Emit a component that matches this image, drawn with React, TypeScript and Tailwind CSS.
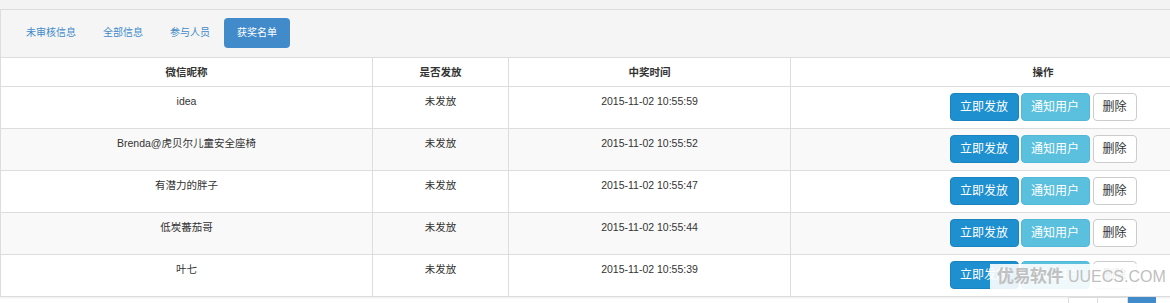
import React from "react";

const rows = [
  { name: "idea", status: "未发放", time: "2015-11-02 10:55:59" },
  { name: "Brenda@虎贝尔儿童安全座椅", status: "未发放", time: "2015-11-02 10:55:52" },
  { name: "有潜力的胖子", status: "未发放", time: "2015-11-02 10:55:47" },
  { name: "低炭蕃茄哥", status: "未发放", time: "2015-11-02 10:55:44" },
  { name: "叶七", status: "未发放", time: "2015-11-02 10:55:39" },
];

const tabs = ["未审核信息", "全部信息", "参与人员", "获奖名单"];

export default function App() {
  return (
    <div className="w-[1170px] h-[303px] overflow-hidden bg-white relative font-['Liberation_Sans','Noto_Sans_CJK_SC',sans-serif] text-[#333]">
      <div className="h-[9px] bg-[#f3f3f3]" />
      <div className="w-[1294px] border-t border-l border-b border-[#dddddd] shadow-[0_1px_2px_rgba(0,0,0,0.08)]">
        <div className="h-[48px] bg-[#f5f5f5] border-b border-[#dddddd] pt-[8px] pl-[12px] flex gap-[1px]">
          {tabs.map((t, i) => (
            <div
              key={t}
              className={
                i === 3
                  ? "h-[30px] px-[13px] leading-[30px] text-[10px] rounded-[4px] bg-[#428bca] text-white"
                  : "h-[30px] px-[13px] leading-[30px] text-[10px] rounded-[4px] text-[#428bca]"
              }
            >
              {t}
            </div>
          ))}
        </div>
        <div className="grid grid-cols-[372px_136px_282px_504px] h-[29px] border-b border-[#dddddd] text-[10.5px] font-bold leading-[28px] text-center">
          <div className="border-r border-[#dddddd]">微信昵称</div>
          <div className="border-r border-[#dddddd]">是否发放</div>
          <div className="border-r border-[#dddddd]">中奖时间</div>
          <div>操作</div>
        </div>
        {rows.map((r, i) => (
          <div
            key={i}
            className={
              "grid grid-cols-[372px_136px_282px_504px] text-[10.5px] text-center " +
              (i < rows.length - 1 ? "h-[42px] border-b border-[#dddddd] " : "h-[41px] ") +
              (i % 2 === 1 ? "bg-[#f9f9f9]" : "bg-white")
            }
          >
            <div className="border-r border-[#dddddd] pt-[4px] leading-[20px]">{r.name}</div>
            <div className="border-r border-[#dddddd] pt-[4px] leading-[20px]">{r.status}</div>
            <div className="border-r border-[#dddddd] pt-[4px] leading-[20px]">{r.time}</div>
            <div className="pt-[6px] flex justify-center items-start text-[12px]">
              <button className="w-[69px] h-[28px] rounded-[4px] bg-[#1e8fcf] border border-[#1a84c0] text-white leading-[26px]">
                立即发放
              </button>
              <button className="ml-[2px] w-[69px] h-[28px] rounded-[4px] bg-[#5bc0de] border border-[#52b8d6] text-white leading-[26px]">
                通知用户
              </button>
              <button className="ml-[3px] w-[44px] h-[28px] rounded-[4px] bg-white border border-[#cccccc] text-[#333] leading-[26px]">
                删除
              </button>
            </div>
          </div>
        ))}
      </div>
      <div className="w-[1170px] flex justify-end pr-[14px]">
        <div className="w-[30px] h-[30px] border border-[#dddddd] bg-white" />
        <div className="w-[30px] h-[30px] border-t border-b border-r border-[#dddddd] bg-white" />
        <div className="w-[28px] h-[30px] bg-[#428bca] border border-[#428bca]" />
      </div>
      <div className="absolute left-[990px] top-[264px] w-[168px] h-[25px] bg-white/90 flex items-center pl-[7px] gap-[5px] text-[#c0c0c0] text-[17px] leading-[25px] whitespace-nowrap">
        <span className="font-semibold tracking-[-0.5px]">优易软件</span>
        <span className="text-[16px]">UUECS.COM</span>
      </div>
    </div>
  );
}
